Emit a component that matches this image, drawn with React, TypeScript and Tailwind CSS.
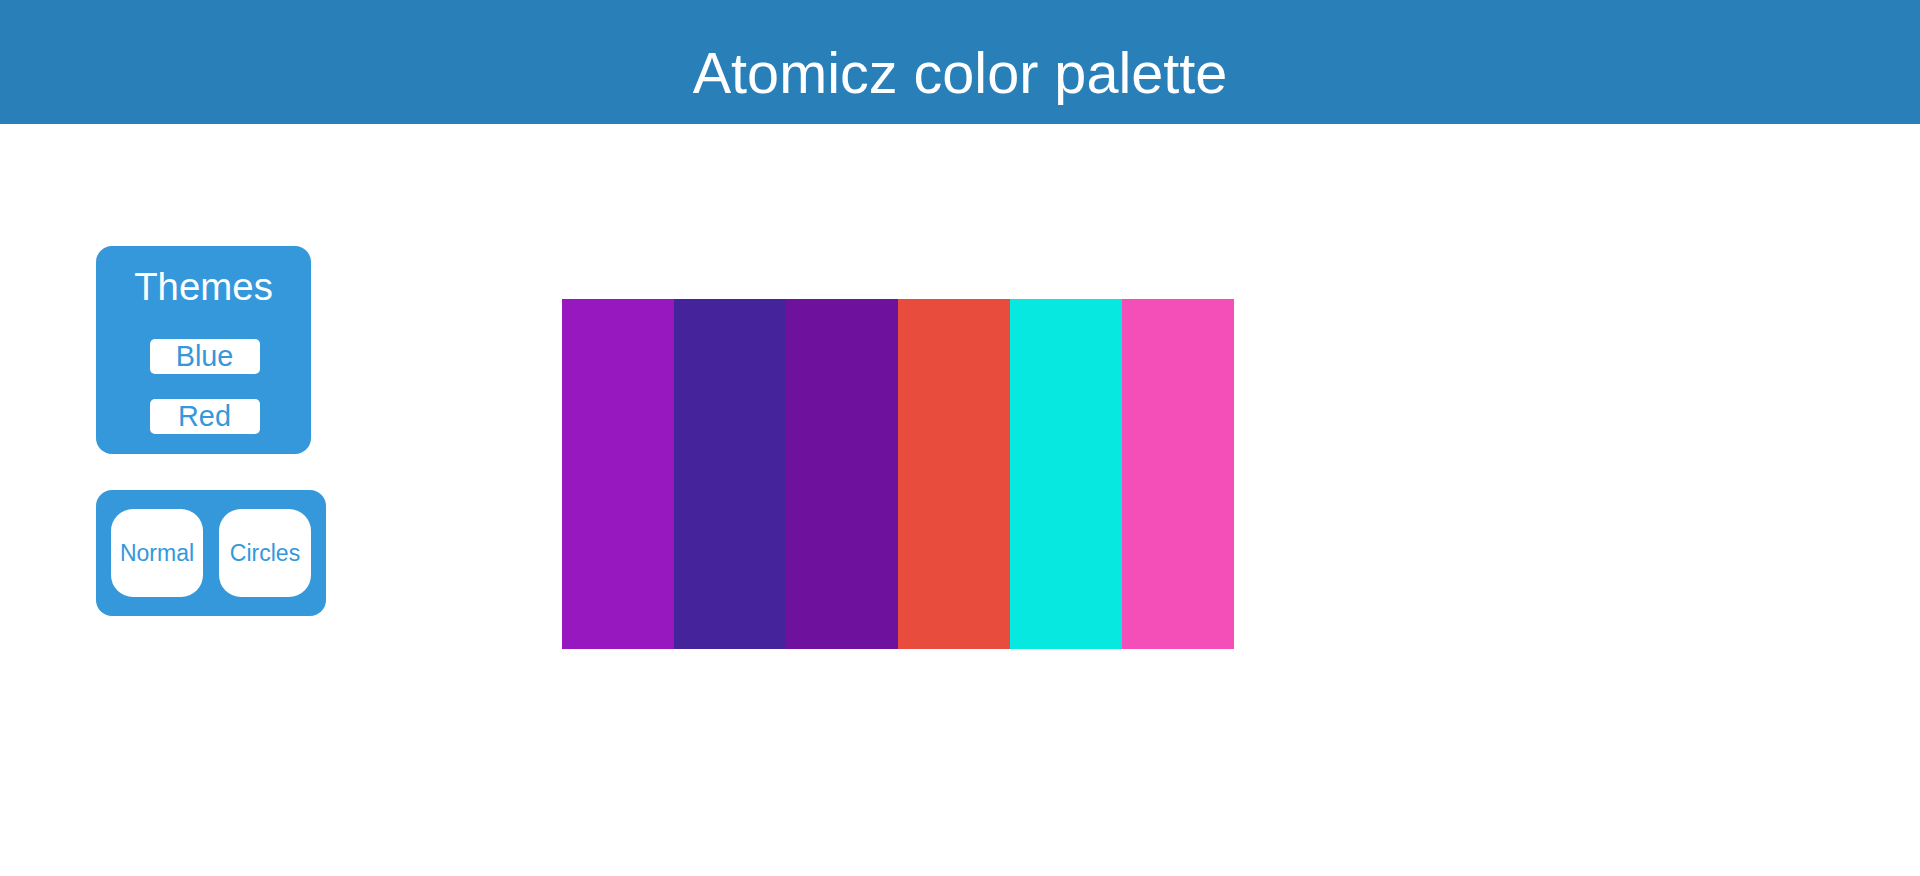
import { useState } from 'react';

const colors = ['#9818c0', '#45249b', '#6e129e', '#e74c3d', '#07e9e0', '#f44eb8'];

export default function App() {
  const [theme, setTheme] = useState('blue');
  const [mode, setMode] = useState('normal');

  return (
    <div className="min-h-[876px] bg-white font-['Liberation_Sans',Arial,sans-serif]">
      <header className="h-[124px] bg-[#2980b9] pt-[40px] text-center">
        <h1 className="text-[57.6px] leading-[1.149] text-white">Atomicz color palette</h1>
      </header>

      <div className="flex items-start pl-[96px] pt-[122px]">
        <div className="flex flex-col items-start gap-[36px]">
          <div className="flex w-[215px] flex-col items-center rounded-2xl bg-[#3498db] pt-[19px] pb-[20px]">
            <h2 className="text-[38.4px] leading-[44px] text-white">Themes</h2>
            <button
              onClick={() => setTheme('blue')}
              className="ml-[2px] mt-[30px] h-[35px] w-[110px] rounded-[5px] bg-white text-[28.8px] leading-[35px] text-[#3498db]"
            >
              Blue
            </button>
            <button
              onClick={() => setTheme('red')}
              className="ml-[2px] mt-[25px] h-[35px] w-[110px] rounded-[5px] bg-white text-[28.8px] leading-[35px] text-[#3498db]"
            >
              Red
            </button>
          </div>

          <div className="flex w-[230px] gap-[16px] rounded-2xl bg-[#3498db] px-[15px] py-[19px]">
            <button
              onClick={() => setMode('normal')}
              className="flex h-[88px] w-[92px] items-center justify-center rounded-[22px] bg-white text-[23px] text-[#3498db]"
            >
              Normal
            </button>
            <button
              onClick={() => setMode('circles')}
              className="flex h-[88px] w-[92px] items-center justify-center rounded-[22px] bg-white text-[23px] text-[#3498db]"
            >
              Circles
            </button>
          </div>
        </div>

        <div className="ml-[236px] mt-[53px] flex h-[350px]" data-theme={theme} data-mode={mode}>
          {colors.map((c) => (
            <div key={c} className="h-full w-[112px]" style={{ backgroundColor: c }} />
          ))}
        </div>
      </div>
    </div>
  );
}
